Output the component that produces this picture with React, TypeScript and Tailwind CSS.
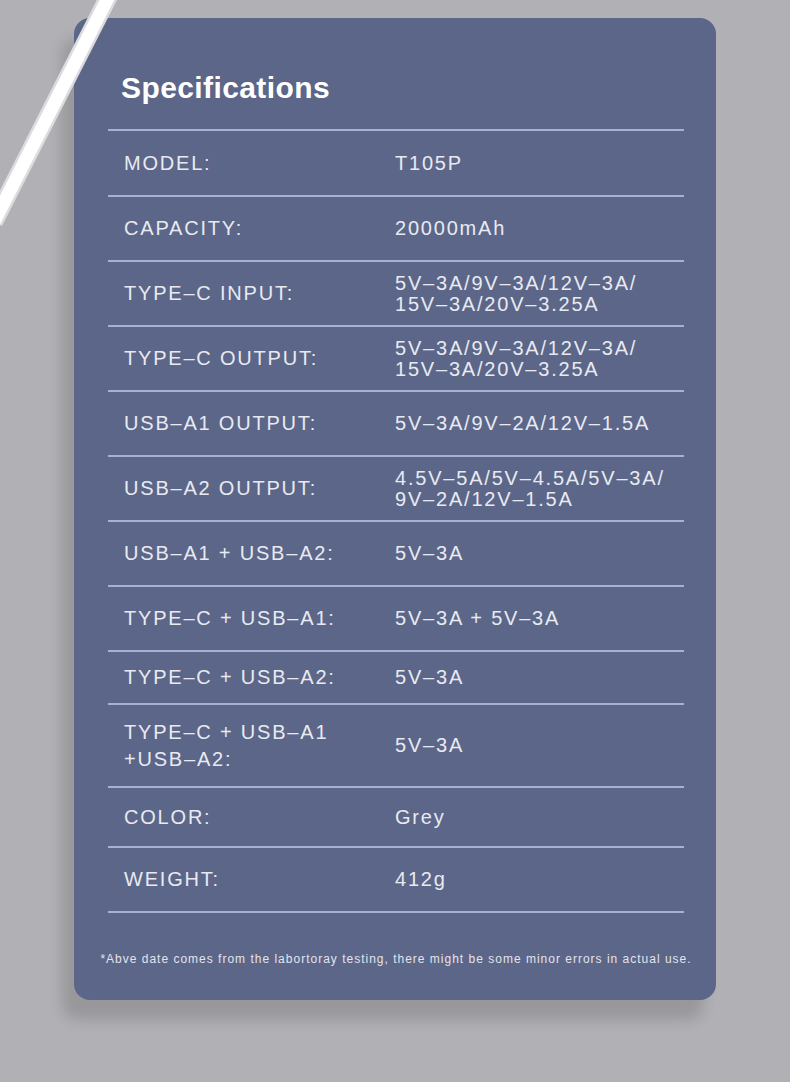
const specs: { label: string[]; value: string[]; h: string }[] = [
  { label: ['MODEL:'], value: ['T105P'], h: 'h-[66px]' },
  { label: ['CAPACITY:'], value: ['20000mAh'], h: 'h-[65px]' },
  { label: ['TYPE–C INPUT:'], value: ['5V–3A/9V–3A/12V–3A/', '15V–3A/20V–3.25A'], h: 'h-[65px]' },
  { label: ['TYPE–C OUTPUT:'], value: ['5V–3A/9V–3A/12V–3A/', '15V–3A/20V–3.25A'], h: 'h-[65px]' },
  { label: ['USB–A1 OUTPUT:'], value: ['5V–3A/9V–2A/12V–1.5A'], h: 'h-[65px]' },
  { label: ['USB–A2 OUTPUT:'], value: ['4.5V–5A/5V–4.5A/5V–3A/', '9V–2A/12V–1.5A'], h: 'h-[65px]' },
  { label: ['USB–A1 + USB–A2:'], value: ['5V–3A'], h: 'h-[65px]' },
  { label: ['TYPE–C + USB–A1:'], value: ['5V–3A + 5V–3A'], h: 'h-[65px]' },
  { label: ['TYPE–C + USB–A2:'], value: ['5V–3A'], h: 'h-[53px]' },
  { label: ['TYPE–C + USB–A1', '+USB–A2:'], value: ['5V–3A'], h: 'h-[83px]' },
  { label: ['COLOR:'], value: ['Grey'], h: 'h-[60px]' },
  { label: ['WEIGHT:'], value: ['412g'], h: 'h-[65px]' },
];

function Cable() {
  return (
    <svg className="absolute left-0 top-0 z-10" width="140" height="250" viewBox="0 0 140 250">
      <line x1="112" y1="-10" x2="-6" y2="222" stroke="#dcdcdf" strokeWidth="18" />
      <line x1="112" y1="-10" x2="-6" y2="222" stroke="#ffffff" strokeWidth="13" />
    </svg>
  );
}

export default function App() {
  return (
    <div className="relative min-h-screen w-full overflow-hidden bg-[#b1b0b4] pl-[74px] pt-[18px] font-['Liberation_Sans',sans-serif]">
      <Cable />
      <div className="w-[642px] h-[982px] rounded-[16px] bg-[#5c6688] shadow-[-12px_20px_14px_rgba(0,0,0,0.14)] pl-[34px] pr-[32px]">
        {/* Title */}
        <div className="h-[111px] pt-[52px] pl-[13px]">
          <h1 className="text-[30px] leading-[36px] font-bold tracking-[0.4px] text-white">
            Specifications
          </h1>
        </div>

        {/* Rows */}
        <div className="border-b-2 border-[#a9b1d3]">
          {specs.map((row, i) => (
            <div
              key={i}
              className={`flex items-center border-t-2 border-[#a9b1d3] pl-[16px] text-[20px] tracking-[1.8px] text-[#e8eaf2] ${row.h}`}
            >
              <div className="w-[271px] leading-[27px]">
                {row.label.map((l, j) => (
                  <div key={j}>{l}</div>
                ))}
              </div>
              <div className="flex-1 leading-[21px]">
                {row.value.map((v, j) => (
                  <div key={j}>{v}</div>
                ))}
              </div>
            </div>
          ))}
        </div>

        {/* Footnote */}
        <div className="pt-[38px] -ml-[20px] -mr-[20px] text-center text-[12px] leading-[16px] tracking-[1px] text-[#e2e4ec]">
          *Abve date comes from the labortoray testing, there might be some minor errors in actual use.
        </div>
      </div>
    </div>
  );
}
